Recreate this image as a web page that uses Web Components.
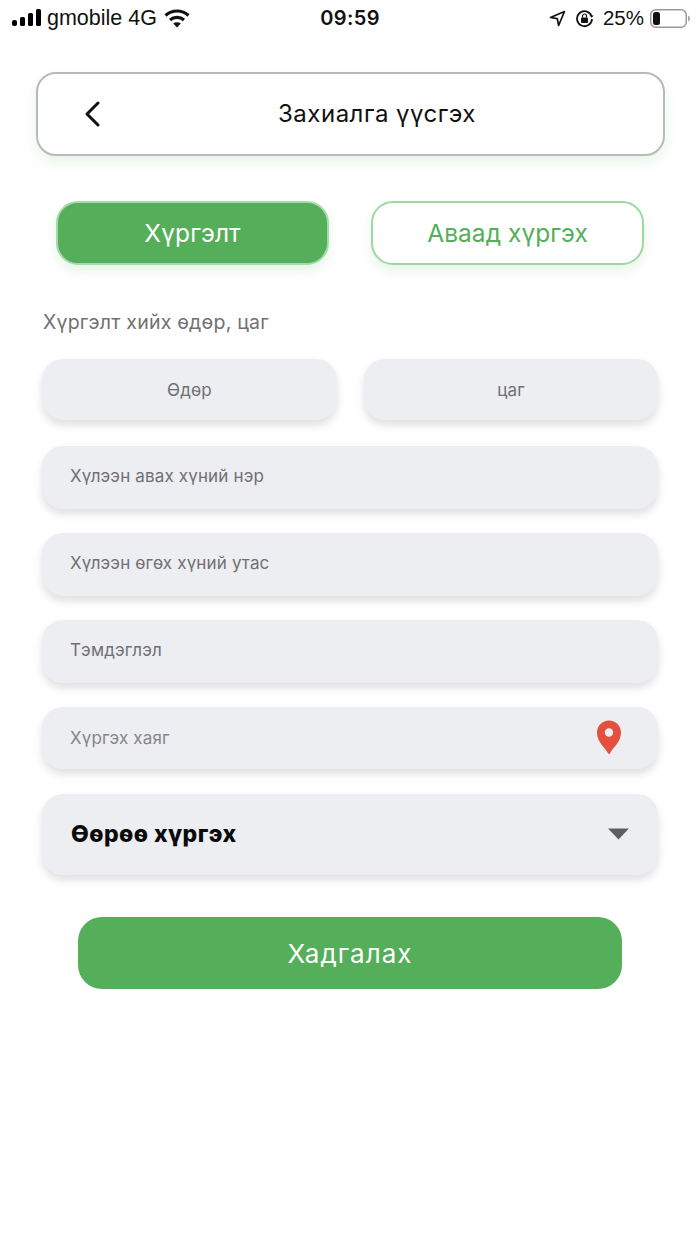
<!DOCTYPE html>
<html lang="mn">
<head>
<meta charset="utf-8">
<title>Захиалга үүсгэх</title>
<style>
  html, body { margin: 0; background: #fff; }
  body { width: 700px; height: 1244px; overflow: hidden; font-family: Inter, "Noto Sans", sans-serif; }
</style>
</head>
<body>
<status-bar></status-bar>
<order-form></order-form>

<script>
class StatusBar extends HTMLElement {
  constructor() {
    super()
    this.attachShadow({mode: 'open'})
    this.shadowRoot.innerHTML = /*html*/`
      <style>
        :host { display: grid; grid-template-columns: 1fr auto 1fr; align-items: center; height: 36px; padding: 0 10px; color: #111; font-family: Inter, sans-serif; font-size: 20px; }
        .left, .right { display: flex; align-items: center; }
        .left { padding-left: 2px; }
        .right { justify-content: flex-end; }
        .carrier { margin: 0 7px 0 6px; font-family: "Liberation Sans", sans-serif; font-size: 21.5px; }
        .time { font-weight: 600; font-size: 20px; letter-spacing: .4px; }
        .pct { margin: 0 6px 0 9px; font-family: "Liberation Sans", sans-serif; font-size: 20.5px; }
        svg { display: block; }
      </style>
      <div class="left">
        <svg width="29" height="18" viewBox="0 0 29 18"><rect x="0" y="11" width="5" height="6" rx="2"/><rect x="8" y="8" width="5" height="9" rx="1.5"/><rect x="16" y="4" width="5" height="13" rx="1.5"/><rect x="24" y="0" width="5" height="17" rx="1.5"/></svg>
        <span class="carrier">gmobile 4G</span>
        <svg width="26" height="19" viewBox="0 0 26 19" fill="none" stroke="#111" stroke-width="3.2"><path d="M1.5 6.5C8 .5 18 .5 24.500 6.500"/><path d="M6 11c4-3.500 10-3.500 14 0"/><path d="M13 18.500l-3.800-4.100c2.200-1.500 5.400-1.500 7.600 0z" fill="#111" stroke="none"/></svg>
      </div>
      <div class="time">09:59</div>
      <div class="right">
        <svg width="17" height="17" viewBox="0 0 17 17" fill="none" stroke="#111" stroke-width="1.700" stroke-linejoin="round"><path d="M15.500 1.500L1.500 7.500l6.800 1.200 1.300 6.800z"/></svg>
        <svg style="margin-left:9px" width="19" height="19" viewBox="0 0 19 19" fill="none" stroke="#111" stroke-width="1.800"><path d="M16.500 7A7.500 7.500 0 1 0 17 10"/><path d="M18.700 6.500l-2 2.300-2-2.300z" fill="#111" stroke="none"/><rect x="6" y="8.500" width="7" height="5.500" rx="1" fill="#111" stroke="none"/><path d="M7.500 8.500V7a2 2 0 0 1 4 0v1.500" stroke-width="1.200"/></svg>
        <span class="pct">25%</span>
        <svg width="40" height="19" viewBox="0 0 40 19"><rect x=".75" y=".75" width="35.500" height="17.500" rx="5" fill="none" stroke="#999" stroke-width="1.500"/><rect x="3" y="3" width="7" height="13" rx="2.500" fill="#111"/><path d="M38 6.500c1.300.4 2 1.500 2 3s-.7 2.600-2 3z" fill="#aaa"/></svg>
      </div>
    `
  }
}

class TitleBar extends HTMLElement {
  constructor() {
    super()
    this.attachShadow({mode: 'open'})
    this.shadowRoot.innerHTML = /*html*/`
      <style>
        :host { display: flex; align-items: center; box-sizing: border-box; height: 84px; margin: 0 -.5px; border: 2px solid #b9b9b9; border-radius: 20px; background: #fff; box-shadow: 0 6px 14px rgba(85,174,89,.14); color: #111; }
        .back { display: flex; padding-left: 46px; width: 56px; flex: none; }
        .title { flex: 1; text-align: center; font-size: 24px; letter-spacing: .5px; margin-left: -48px; padding-bottom: 2px; }
      </style>
      <div class="back">
        <svg width="16" height="26" viewBox="0 0 16 26" fill="none" stroke="#111" stroke-width="3" stroke-linecap="round" stroke-linejoin="round"><path d="M14 2L3 13l11 11"/></svg>
      </div>
      <div class="title"><slot></slot></div>
    `
  }
}

class ToggleButton extends HTMLElement {
  constructor() {
    super()
    this.attachShadow({mode: 'open'})
    this.shadowRoot.innerHTML = /*html*/`
      <style>
        :host { display: flex; align-items: center; justify-content: center; box-sizing: border-box; width: 272.6px; height: 64px; border: 2px solid #9fd8a2; border-radius: 22px; background: #fff; color: #55ae59; font-size: 24.500px; letter-spacing: .05px; box-shadow: 0 6px 12px rgba(85,174,89,.14); }
        :host([active]) { background: #55ae59; color: #fff; letter-spacing: .1px; border-color: #a6dba9; }
      </style>
      <slot></slot>
    `
  }
}

class FormField extends HTMLElement {
  constructor() {
    super()
    this.attachShadow({mode: 'open'})
    this.shadowRoot.innerHTML = /*html*/`
      <style>
        :host { display: flex; align-items: center; justify-content: space-between; box-sizing: border-box; height: 63px; padding: 0 28px 3px; border-radius: 21px; background: #edeef2; color: #707073; font-size: 17px; letter-spacing: .15px; box-shadow: 0 5px 9px rgba(0,0,0,.13); }
        :host([center]) { justify-content: center; padding: 0; height: 61px; }
        :host([strong]) { height: 81px; margin-top: 1px; color: #0b0b0b; font-size: 23px; font-weight: 800; letter-spacing: .45px; padding: 0 29px 2px; }
        ::slotted(svg) { display: block; }
      </style>
      <slot></slot>
      <slot name="icon"></slot>
    `
  }
}

class OrderForm extends HTMLElement {
  constructor() {
    super()
    this.attachShadow({mode: 'open'})
    this.shadowRoot.innerHTML = /*html*/`
      <style>
        :host { display: block; padding: 36px 36px 0; font-family: Inter, sans-serif; }
        .toggles { display: flex; justify-content: space-between; padding: 0 20.2px; margin-top: 45px; }
        .label { margin: 45px 7px 0; font-size: 19.500px; line-height: 24px; letter-spacing: .22px; color: #707070; }
        .fields { display: flex; flex-direction: column; gap: 24px; margin: 25px 6px 0; }
        .row { display: grid; grid-template-columns: 295px 294px; justify-content: space-between; margin-bottom: 2px; }
        .save { display: flex; align-items: center; justify-content: center; height: 72px; margin: 42px 42px 0; border-radius: 24px; background: #55ae59; color: #fff; font-size: 26px; letter-spacing: 1px; }
      </style>
      <title-bar>Захиалга үүсгэх</title-bar>
      <div class="toggles">
        <toggle-button active>Хүргэлт</toggle-button>
        <toggle-button>Аваад хүргэх</toggle-button>
      </div>
      <p class="label">Хүргэлт хийх өдөр, цаг</p>
      <div class="fields">
        <div class="row">
          <form-field center>Өдөр</form-field>
          <form-field center>цаг</form-field>
        </div>
        <form-field>Хүлээн авах хүний нэр</form-field>
        <form-field>Хүлээн өгөх хүний утас</form-field>
        <form-field>Тэмдэглэл</form-field>
        <form-field style="color:#858589;height:62px;padding-bottom:0">Хүргэх хаяг
          <svg slot="icon" width="26" height="34" viewBox="0 0 26 34" style="margin:0 8px 2px 0"><path fill-rule="evenodd" d="M13 34c-.8 0-1.200-.9-1.600-1.700C9 27.500 1 22 1 12.500 1 5.500 6.400.5 13 .5s12 5 12 12c0 9.500-8 15-10.400 19.800-.4.800-.8 1.700-1.600 1.700zM13 8.300a4.200 4.200 0 1 0 0 8.400 4.200 4.200 0 0 0 0-8.400z" fill="#e4503f"/></svg>
        </form-field>
        <form-field strong>Өөрөө хүргэх
          <svg slot="icon" width="21" height="12" viewBox="0 0 21 12"><path d="M0 .5h21L10.500 11.500z" fill="#5f5f5f"/></svg>
        </form-field>
      </div>
      <div class="save">Хадгалах</div>
    `
  }
}

customElements.define('status-bar', StatusBar)
customElements.define('title-bar', TitleBar)
customElements.define('toggle-button', ToggleButton)
customElements.define('form-field', FormField)
customElements.define('order-form', OrderForm)
</script>
</body>
</html>
